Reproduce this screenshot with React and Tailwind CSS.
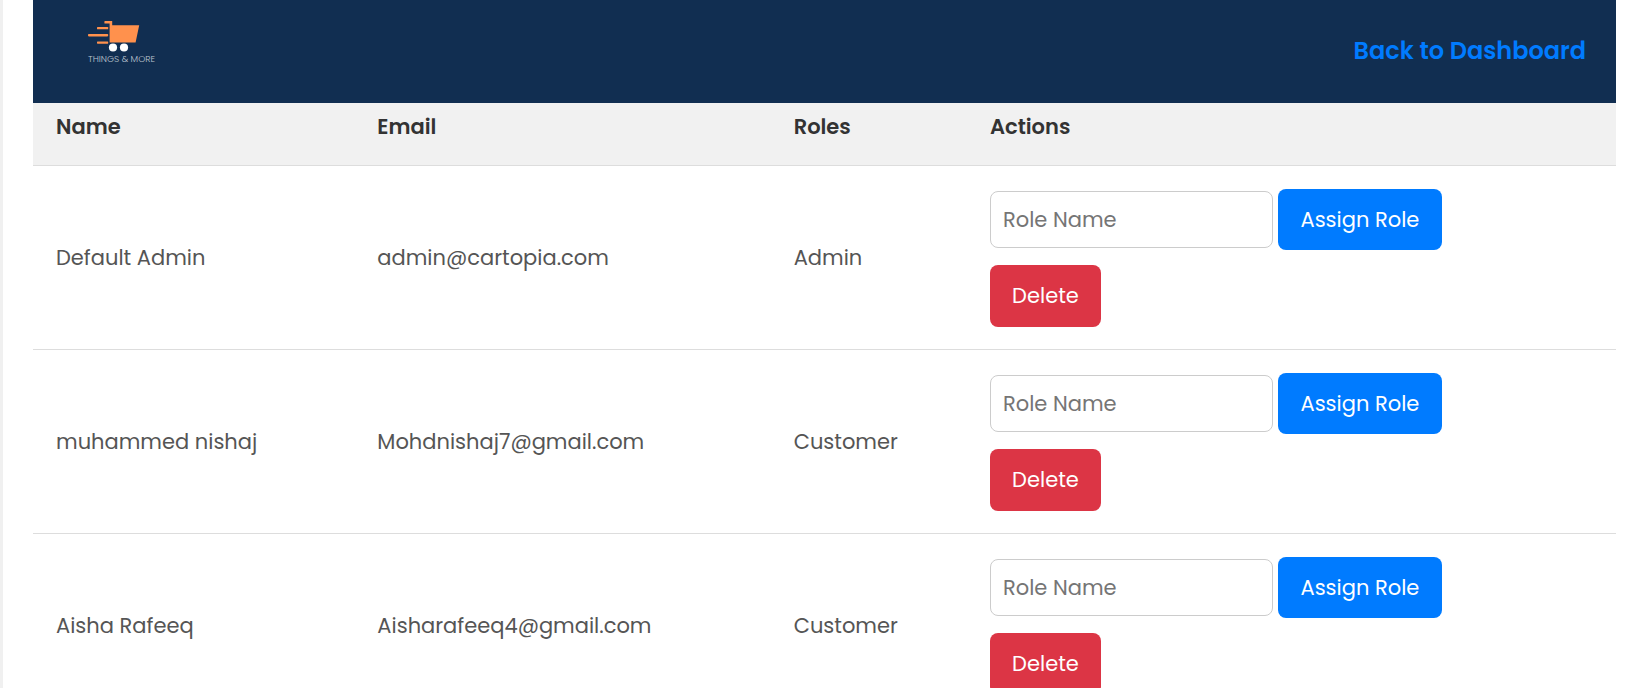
const users = [
  { name: "Default Admin", email: "admin@cartopia.com", role: "Admin" },
  { name: "muhammed nishaj", email: "Mohdnishaj7@gmail.com", role: "Customer" },
  { name: "Aisha Rafeeq", email: "Aisharafeeq4@gmail.com", role: "Customer" },
];

function Logo() {
  return (
    <a href="#home" className="flex flex-col" aria-label="Things & More">
      <svg viewBox="0 0 52 32" className="h-8 w-[52px]" aria-hidden="true">
        <g fill="#ff914d">
          <path d="M17 1h7.2v4.2H51.2L47.6 22.6H21.6V3.6H17a.6.6 0 0 1-.6-.6V1.6A.6.6 0 0 1 17 1z" />
          <rect x="9" y="7" width="11.2" height="2.3" rx="0.6" />
          <rect x="0" y="14" width="20.2" height="2.4" rx="0.8" />
          <rect x="9" y="21.4" width="11.2" height="2.3" rx="0.6" />
        </g>
        <circle cx="25" cy="27.5" r="4.1" fill="#fff" />
        <circle cx="36" cy="27.5" r="4.1" fill="#fff" />
      </svg>
      <span className="pt-px text-[9px] leading-3 font-light text-[#bcc4cf]">
        THINGS &amp; MORE
      </span>
    </a>
  );
}

function UserRow({ user }) {
  return (
    <tr className="border-b border-[#dddddd]">
      <td className="px-[23px]">{user.name}</td>
      <td className="px-[23px]">{user.email}</td>
      <td className="px-[23px]">{user.role}</td>
      <td className="px-[23px] pt-[23px] pb-[22px]">
        <form className="flex items-center gap-[5px]" onSubmit={(e) => e.preventDefault()}>
          <input
            type="text"
            aria-label="Role Name"
            placeholder="Role Name"
            className="h-[57px] w-[283px] rounded-lg border border-[#cccccc] bg-white px-3 placeholder:text-[#757575]"
          />
          <button
            type="submit"
            className="h-[61px] w-[164px] whitespace-nowrap rounded-lg bg-[#007bff] text-white"
          >
            Assign Role
          </button>
        </form>
        <button type="button" className="mt-[15px] block h-[62px] w-[111px] rounded-lg bg-[#dc3545] text-white">
          Delete
        </button>
      </td>
    </tr>
  );
}

export default function App() {
  return (
    <div className="min-h-screen border-l-[3px] border-[#f0f0f0] bg-white pl-[30px] pr-[26px] font-[Poppins,Inter,sans-serif] text-[21px] leading-8 text-[#555555]">
      <header className="flex h-[103px] items-start justify-between bg-[#112e51] pl-[55px] pr-[30px] pt-5">
        <Logo />
        <a href="#dashboard" className="pt-[15px] text-2xl font-semibold text-[#007bff]">
          Back to Dashboard
        </a>
      </header>
      <table className="w-full table-fixed border-collapse text-left">
        <thead>
          <tr className="border-b border-[#dddddd] bg-[#f1f1f1] text-[#333333]">
            <th className="w-[20.3%] px-[23px] pt-2 pb-[22px] font-semibold">Name</th>
            <th className="w-[26.3%] px-[23px] pt-2 pb-[22px] font-semibold">Email</th>
            <th className="w-[12.4%] px-[23px] pt-2 pb-[22px] font-semibold">Roles</th>
            <th className="px-[23px] pt-2 pb-[22px] font-semibold">Actions</th>
          </tr>
        </thead>
        <tbody>
          {users.map((user) => (
            <UserRow key={user.email} user={user} />
          ))}
        </tbody>
      </table>
    </div>
  );
}
